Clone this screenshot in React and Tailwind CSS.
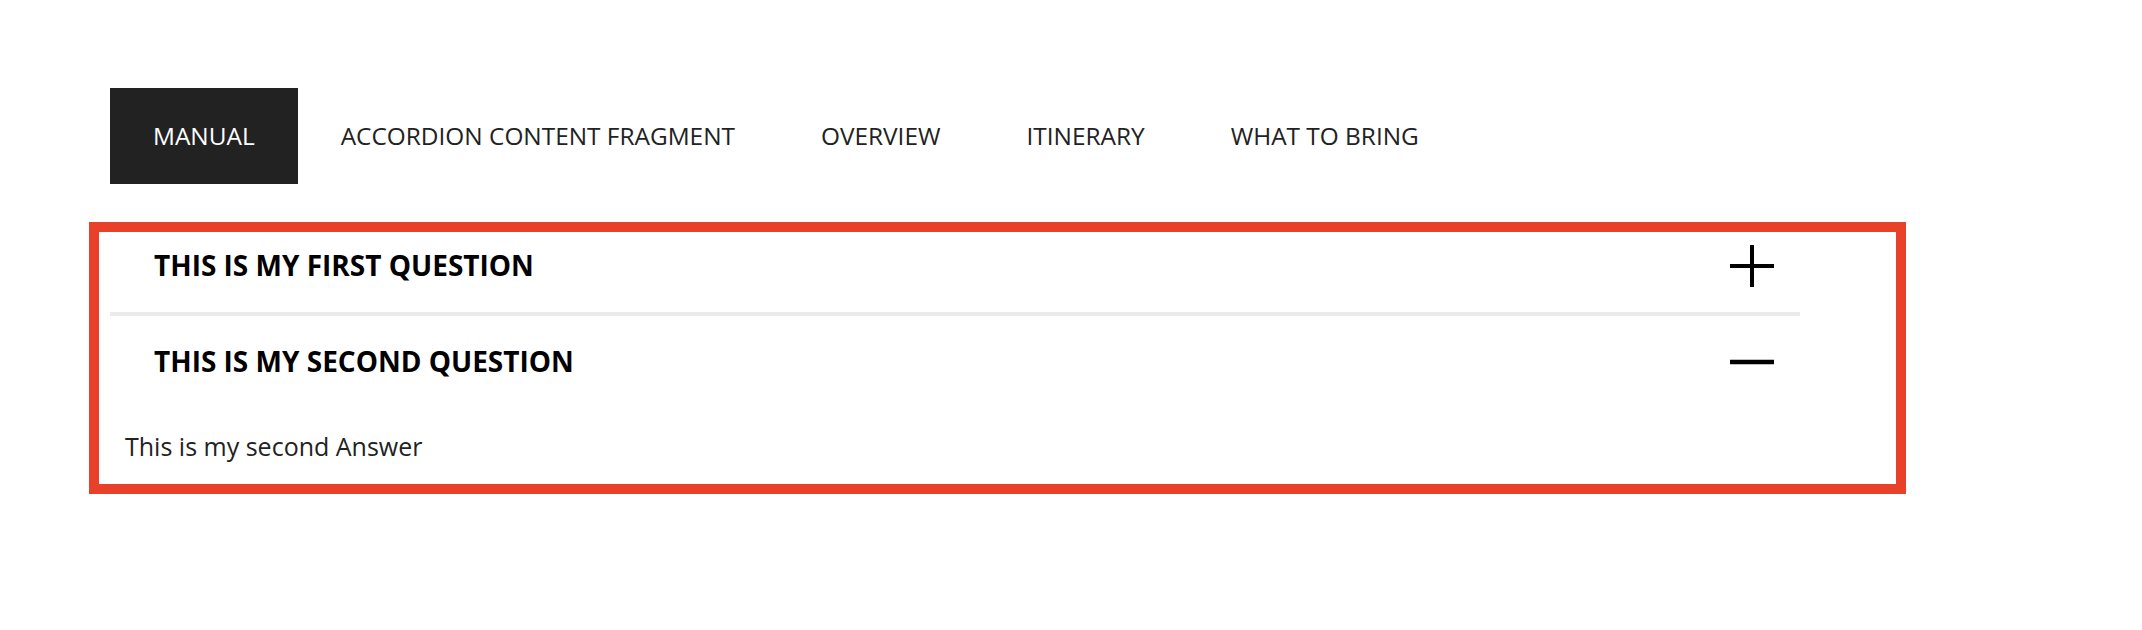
const tabs = ["MANUAL", "ACCORDION CONTENT FRAGMENT", "OVERVIEW", "ITINERARY", "WHAT TO BRING"];

function PlusIcon() {
  return (
    <svg width="44" height="42" viewBox="0 0 44 42" className="block">
      <line x1="0" y1="21" x2="44" y2="21" stroke="#000" strokeWidth="4" />
      <line x1="22" y1="0" x2="22" y2="42" stroke="#000" strokeWidth="4" />
    </svg>
  );
}

function MinusIcon() {
  return (
    <svg width="44" height="42" viewBox="0 0 44 42" className="block">
      <line x1="0" y1="21" x2="44" y2="21" stroke="#000" strokeWidth="4.5" />
    </svg>
  );
}

export default function App() {
  const font = { fontFamily: '"Open Sans", "Noto Sans", sans-serif' };

  const questionRow = (title, icon) => {
    return (
      <div className="flex items-center justify-between h-[68px] pl-[44px] pr-[26px]">
        <h3 className="text-[28px] font-bold text-black leading-none -mt-[2px]">{title}</h3>
        {icon}
      </div>
    );
  };

  return (
    <div className="min-h-[630px] bg-white pt-[88px]" style={font}>
      <div className="flex ml-[110px]">
        {tabs.map((tab, i) => (
          <div
            key={tab}
            className={
              i === 0
                ? "h-[96px] px-[43px] flex items-center bg-[#222222] text-white text-[24.4px]"
                : "h-[96px] px-[43px] flex items-center text-[#222222] text-[24.4px]"
            }
          >
            {tab}
          </div>
        ))}
      </div>

      <div className="mt-[38px] ml-[89px] w-[1817px] border-[10px] border-[#e9402a] pl-[11px] pr-[96px]">
        <div className="w-[1690px]">
          {questionRow("THIS IS MY FIRST QUESTION", <PlusIcon />)}
          <div className="mt-[12px] h-[4px] bg-[#ebebeb]"></div>
          <div className="mt-[12px]">{questionRow("THIS IS MY SECOND QUESTION", <MinusIcon />)}</div>
          <p className="pt-[29px] pb-[17px] pl-[15px] text-[25px] leading-[42px] text-[#222222]">
            This is my second Answer
          </p>
        </div>
      </div>
    </div>
  );
}
